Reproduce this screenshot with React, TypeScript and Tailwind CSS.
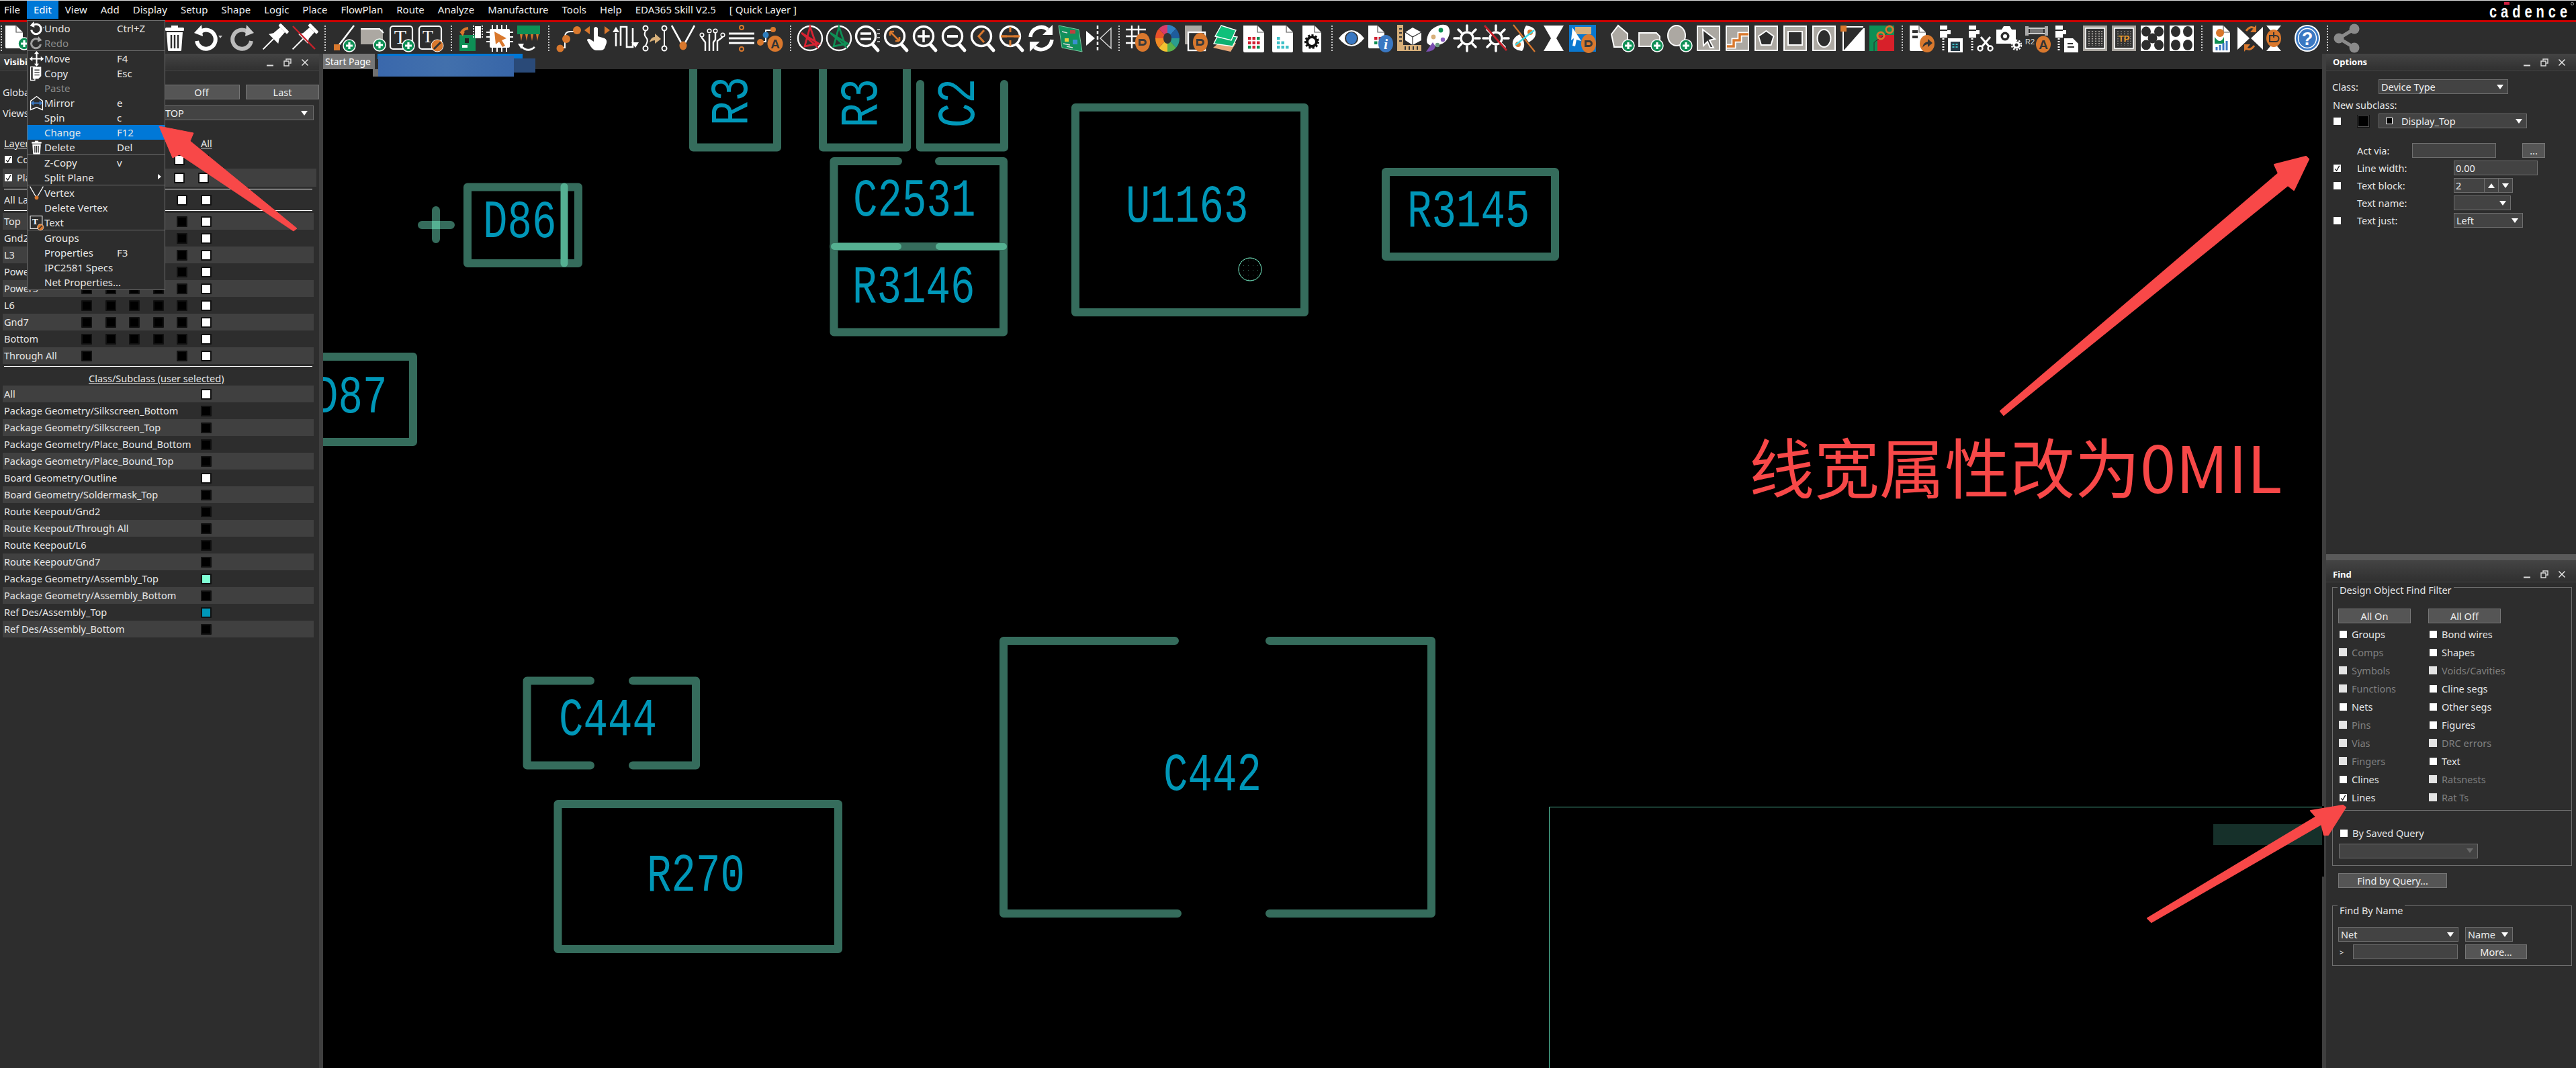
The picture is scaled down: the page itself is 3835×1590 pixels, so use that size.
import React from "react";

const O = "#d9782d";
const GR = "#0e8f55";
const GY = "#aca8a2";

const Plus = ({ x, y }: { x: number; y: number }) => (
  <g>
    <circle cx={x} cy={y} r={9} fill={GR} stroke="#fff" strokeWidth="1.5" />
    <path d={`M${x - 5} ${y}h10M${x} ${y - 5}v10`} stroke="#fff" strokeWidth="3.2" />
  </g>
);
const EyeB = ({ x, y }: { x: number; y: number }) => (
  <g>
    <ellipse cx={x} cy={y} rx={11} ry={14} fill={O} />
    <path d={`M${x - 6} ${y - 5}h7a5 5 0 0 1 0 10h-7z`} fill="#3a3a3a" />
    <path d={`M${x - 3} ${y - 2}h4a2 2 0 0 1 0 4h-4z`} fill={O} />
  </g>
);
const PenB = ({ x, y }: { x: number; y: number }) => (
  <g>
    <circle cx={x} cy={y} r={9} fill={O} stroke="#fff" strokeWidth="1" />
    <path d={`M${x - 5} ${y + 5}l10 -10`} stroke="#333" strokeWidth="3" />
  </g>
);
const Doc = ({ x = 6, w = 28, h = 38 }: { x?: number; w?: number; h?: number }) => (
  <g>
    <path d={`M${x} 3h${w - 10}l10 10v${h - 10}q0 2 -2 2h-${w - 4}q-2 0 -2 -2z`} fill="#fff" />
    <path d={`M${x + w - 10} 3v10h10`} fill="none" stroke="#555" strokeWidth="1.2" />
  </g>
);
const Mag = ({ children }: { children?: React.ReactNode }) => (
  <g>
    <circle cx="17" cy="19" r="14.5" fill="none" stroke="#fff" strokeWidth="3.4" />
    <path d="M27 31l8 9" stroke="#fff" strokeWidth="5" strokeLinecap="round" />
    {children}
  </g>
);
const Pin = () => (
  <g transform="rotate(45 20 20)">
    <rect x="11" y="0" width="18" height="5" rx="1.5" fill="#fff" />
    <path d="M15 5h10l1 13l4 6H10l4-6z" fill="#fff" />
    <path d="M20 24v22" stroke="#fff" strokeWidth="2" />
  </g>
);
const Box = ({ children }: { children?: React.ReactNode }) => (
  <g>
    <rect x="2" y="3" width="35" height="38" fill={GY} />
    <rect x="3" y="4" width="33" height="36" fill="none" stroke="#fff" strokeWidth="2" />
    {children}
  </g>
);
const Wheel = () => {
  const cols = ["#2f7fc0", "#1e5c9c", "#2a9d8f", "#5ab04a", "#f2c230", "#f08a24", "#e8502a", "#d83a6a"];
  return (
    <g>
      {cols.map((c, i) => {
        const a0 = (i * Math.PI) / 4 - Math.PI / 2;
        const a1 = ((i + 1) * Math.PI) / 4 - Math.PI / 2;
        return (
          <path
            key={c}
            d={`M20 22L${20 + 18 * Math.cos(a0)} ${22 + 20 * Math.sin(a0)}A18 20 0 0 1 ${20 + 18 * Math.cos(a1)} ${22 + 20 * Math.sin(a1)}z`}
            fill={c}
          />
        );
      })}
      <ellipse cx="20" cy="22" rx="6" ry="8" fill="#333" />
    </g>
  );
};
const Dots = ({ cs }: { cs: string[] }) => (
  <g>
    {cs.map((c, i) => (
      <rect key={i} x={11 + (i % 3) * 6.5} y={20 + Math.floor(i / 3) * 6.5} width="4.5" height="4.5" fill={c} />
    ))}
  </g>
);
const PinsIc = () => (
  <g>
    <rect x="4" y="3" width="11" height="6" fill="#fff" />
    <rect x="4" y="11" width="11" height="10" fill="#fff" />
    <rect x="15" y="10" width="5" height="6" fill="#fff" />
    <path d="M9 22v19" stroke="#fff" strokeWidth="3" strokeDasharray="2 2" />
  </g>
);
const Sun = () => (
  <g>
    <circle cx="20" cy="22" r="9" fill="none" stroke="#fff" strokeWidth="3.5" />
    <path d="M20 3v7M20 34v7M1 22h7M32 22h7M7 9l5 5M28 30l5 5M33 9l-5 5M12 30l-5 5" stroke="#fff" strokeWidth="3.5" strokeLinecap="round" />
  </g>
);
const Holes = () => (
  <g>
    <rect x="2" y="3" width="35" height="38" fill="#fff" />
    {[[10, 12], [29, 12], [10, 32], [29, 32], [19.5, 22]].map(([x, y]) => (
      <ellipse key={x * y} cx={x} cy={y} rx="7" ry="7.5" fill="#2d2d2d" />
    ))}
  </g>
);

const icons: Record<string, React.ReactNode> = {
  docAdd: (
    <g>
      <Doc x={2} w={26} h={32} />
      <Plus x={30} y={30} />
    </g>
  ),
  trash: (
    <g>
      <rect x="15" y="3" width="10" height="4" fill="#fff" />
      <rect x="6" y="6" width="28" height="5" rx="1.5" fill="#fff" />
      <path d="M8 13h24l-2 27q0 1 -2 1H12q-2 0 -2 -1z" fill="#fff" />
      <path d="M15 17v20M20 17v20M25 17v20" stroke="#2d2d2d" strokeWidth="2.5" />
    </g>
  ),
  undo: (
    <g>
      <path d="M11 12A14 14 0 1 1 5 26" fill="none" stroke="#fff" strokeWidth="6" />
      <path d="M12 2l2 17L1 14z" fill="#fff" />
      <path d="M37 18h6l-3 4z" fill="#ccc" />
    </g>
  ),
  redo: (
    <g>
      <path d="M27 12A14 14 0 1 0 33 26" fill="none" stroke="#bbb" strokeWidth="6" />
      <path d="M26 2l-2 17l13 -5z" fill="#ccc" />
    </g>
  ),
  pin: <Pin />,
  pinX: (
    <g>
      <Pin />
      <path d="M2 4l33 34" stroke="#c8202a" strokeWidth="2.5" />
    </g>
  ),
  lineAdd: (
    <g>
      <path d="M34 3L11 33" stroke="#fff" strokeWidth="2.6" />
      <rect x="4" y="31" width="9" height="9" fill={O} />
      <Plus x={27} y={33} />
    </g>
  ),
  rectAdd: (
    <g>
      <path d="M1 9h33v22H1z" fill={GY} />
      <path d="M1 8h28l6 6" fill="none" stroke="#fff" strokeWidth="2" />
      <Plus x={29} y={32} />
    </g>
  ),
  tAdd: (
    <g>
      <rect x="2" y="4" width="33" height="34" rx="4" fill="none" stroke="#fff" strokeWidth="2.2" />
      <text x="17" y="30" textAnchor="middle" fontFamily="Liberation Serif" fontSize="30" fill="#fff">T</text>
      <Plus x={29} y={33} />
    </g>
  ),
  tEdit: (
    <g>
      <rect x="2" y="4" width="33" height="34" rx="4" fill="none" stroke="#fff" strokeWidth="2.2" />
      <text x="15" y="28" textAnchor="middle" fontFamily="Liberation Serif" fontSize="26" fill="#fff">T</text>
      <PenB x={29} y={33} />
    </g>
  ),
  board: (
    <g>
      <rect x="3" y="17" width="24" height="24" fill={GR} />
      <rect x="11" y="22" width="6" height="7" fill="#222" />
      <rect x="7" y="32" width="8" height="4" fill="#fff" />
      <rect x="26" y="4" width="9" height="18" fill="#fff" />
      <path d="M24 3v20M37 3v20" stroke="#ddd" strokeWidth="2" strokeDasharray="2 2" />
      <path d="M6 14q2 -6 10 -7" fill="none" stroke={O} strokeWidth="4" />
      <path d="M3 12l8 0l-3 7z" fill={O} />
    </g>
  ),
  chip: (
    <g>
      <rect x="5" y="8" width="30" height="28" rx="2" fill="#fff" />
      <path d="M9 2v6M16 2v6M23 2v6M30 2v6M9 36v6M16 36v6M23 36v6M30 36v6M0 13h5M0 20h5M0 27h5M35 13h5M35 20h5M35 27h5" stroke="#fff" strokeWidth="2" />
      <path d="M12 12l18 10l-7 3l5 8l-4 2l-5-8l-5 4z" fill={O} />
    </g>
  ),
  conn: (
    <g>
      <rect x="3" y="3" width="34" height="13" fill={GR} />
      <path d="M7 16l2 10l2-10zM15 16l2 10l2-10zM23 16l2 10l2-10zM31 16l2 10l2-10z" fill={O} />
      <path d="M9 34q10 10 20 1" fill="none" stroke="#fff" strokeWidth="3" />
      <path d="M4 30l9 0l-4 8z" fill="#fff" />
    </g>
  ),
  route: (
    <g>
      <path d="M10 36h5V20q0-8 8-8h7" fill="none" stroke="#fff" strokeWidth="2" />
      <circle cx="8" cy="37" r="5.5" fill={O} />
      <circle cx="17" cy="23" r="6" fill={O} />
      <circle cx="33" cy="10" r="6" fill={O} />
    </g>
  ),
  slide: (
    <g>
      <path d="M15 7q3-4 6 0v12l10 3q4 2 3 7l-3 8q-2 3-6 3h-7q-5-1-9-8l-4-7q0-3 4-2l6 4z" fill="#fff" />
      <path d="M1 10l8-6v12zM39 10l-8-6v12z" fill={O} />
    </g>
  ),
  delay: (
    <g>
      <path d="M5 14v18M5 34V14" stroke="#fff" strokeWidth="2.5" />
      <path d="M10 34V6h9v30h9V8" fill="none" stroke="#fff" strokeWidth="2.6" transform="translate(2 -1)" />
      <path d="M0 13l5-8l5 8zM28 28h11l-5 8z" fill="#fff" />
    </g>
  ),
  swap: (
    <g>
      <circle cx="6" cy="7" r="3.5" fill="none" stroke="#fff" strokeWidth="2" />
      <circle cx="6" cy="37" r="3.5" fill="none" stroke="#fff" strokeWidth="2" />
      <path d="M6 11q-3 6 1 10t-1 12" fill="none" stroke="#fff" strokeWidth="2" />
      <circle cx="34" cy="7" r="3.5" fill="none" stroke="#fff" strokeWidth="2" />
      <circle cx="34" cy="37" r="3.5" fill="none" stroke="#fff" strokeWidth="2" />
      <path d="M34 11v22" stroke="#fff" strokeWidth="2" />
      <path d="M12 28q2-8 8-8v-5l9 8l-9 7v-5q-4 0-8 3z" fill="#d8b07a" />
    </g>
  ),
  vertex: (
    <g>
      <path d="M2 3L19 34L36 3" fill="none" stroke="#fff" strokeWidth="2.6" />
      <ellipse cx="19" cy="33" rx="5.5" ry="6.5" fill={O} />
    </g>
  ),
  fanout: (
    <g>
      <path d="M9 41V28L3 20M15 41V16M21 41V28l3-4V14M27 41V26l8-6" fill="none" stroke="#fff" strokeWidth="2.4" />
      <circle cx="4" cy="17" r="2.8" fill="none" stroke="#fff" strokeWidth="1.5" />
      <circle cx="15" cy="11" r="2.8" fill="none" stroke="#fff" strokeWidth="1.5" />
      <circle cx="24" cy="11" r="2.8" fill="none" stroke="#fff" strokeWidth="1.5" />
      <circle cx="35" cy="17" r="2.8" fill="none" stroke="#fff" strokeWidth="1.5" />
    </g>
  ),
  para: (
    <g>
      <path d="M1 15h38M1 22h38M1 29h38" stroke="#fff" strokeWidth="3" />
      <circle cx="20" cy="6" r="3" fill="none" stroke={O} strokeWidth="2" />
      <circle cx="20" cy="38" r="3" fill="none" stroke={O} strokeWidth="2" />
    </g>
  ),
  auto: (
    <g>
      <path d="M6 27h7V10h9" fill="none" stroke="#fff" strokeWidth="2" />
      <circle cx="5" cy="28" r="5" fill={O} />
      <circle cx="13" cy="17" r="4.5" fill="#2f7fc0" />
      <circle cx="24" cy="9" r="4" fill={O} />
      <ellipse cx="27" cy="30" rx="11.5" ry="12" fill={O} />
      <text x="27" y="37" textAnchor="middle" fontFamily="Liberation Sans" fontWeight="700" fontSize="19" fill="#333">A</text>
    </g>
  ),
  ratR: (
    <g>
      <circle cx="20" cy="22" r="18" fill="none" stroke="#fff" strokeWidth="2.4" />
      <path d="M7 14L33 30L12 34L20 5L30 34z" fill="none" stroke="#d62332" strokeWidth="2.8" />
    </g>
  ),
  ratG: (
    <g>
      <circle cx="20" cy="22" r="18" fill="none" stroke="#fff" strokeWidth="2.4" />
      <path d="M7 14L33 30L12 34L20 5L30 34z" fill="none" stroke="#0e8f55" strokeWidth="2.8" />
    </g>
  ),
  zList: <Mag><path d="M9 15h16M9 23h16" stroke="#fff" strokeWidth="3.5" /><path d="M34 9h4M34 15h4M34 21h4M34 27h4" stroke="#ddd" strokeWidth="1.5" /></Mag>,
  zFit: <Mag><path d="M10 12l14 14M10 12h6M10 12v6M24 26h-6M24 26v-6" stroke={O} strokeWidth="2.6" fill="none" /></Mag>,
  zIn: <Mag><path d="M8 19h18M17 10v18" stroke="#fff" strokeWidth="3.5" /></Mag>,
  zOut: <Mag><path d="M9 19h16" stroke="#fff" strokeWidth="4" /></Mag>,
  zPrev: <Mag><path d="M21 10l-8 9l8 9" fill="none" stroke={O} strokeWidth="3" /></Mag>,
  zCtr: <Mag><path d="M17 5v8M17 25v8M3 19h9M22 19h9" stroke={O} strokeWidth="3" /><path d="M4 19h26" stroke={O} strokeWidth="3" /></Mag>,
  redraw: (
    <g>
      <path d="M4 20A16 16 0 0 1 30 9" fill="none" stroke="#fff" strokeWidth="5.5" />
      <path d="M36 24A16 16 0 0 1 10 35" fill="none" stroke="#fff" strokeWidth="5.5" />
      <path d="M37 2v15H22zM3 42V27h15z" fill="#fff" />
    </g>
  ),
  b3d: (
    <g>
      <path d="M3 3l30 6l5 33l-30-6z" fill="#12905c" stroke="#7ac7a0" strokeWidth="1" />
      <rect x="20" y="10" width="8" height="5" fill="#c04040" />
      <rect x="24" y="24" width="7" height="7" fill="#3a90d0" />
      <rect x="12" y="22" width="6" height="5" fill="#e8d040" />
      <path d="M8 12l8 2M10 30l10 2M15 34l9 2" stroke="#ddd" strokeWidth="1.5" />
    </g>
  ),
  mirror: (
    <g>
      <path d="M1 11l13 11L1 33z" fill="#fff" />
      <path d="M38 7v30L22 22z" fill="none" stroke="#ddd" strokeWidth="1.4" />
      <path d="M18 3v38" stroke="#fff" strokeWidth="2.5" strokeDasharray="5 3" />
    </g>
  ),
  grid: (
    <g>
      <path d="M10 3v34M20 3v30M1 9h30M1 19h22M1 29h18" stroke="#fff" strokeWidth="2.4" />
      <EyeB x={26} y={28} />
    </g>
  ),
  wheel: <Wheel />,
  layers: (
    <g>
      <rect x="3" y="3" width="25" height="28" fill={GY} />
      <rect x="8" y="13" width="25" height="27" fill="#2d2d2d" stroke="#fff" strokeWidth="2.4" />
      <EyeB x={26} y={28} />
    </g>
  ),
  layG: (
    <g>
      <path d="M14 26l22 3l-8 13L2 36z" fill="#e8a878" />
      <path d="M10 16l28 4l-7 14L3 30z" fill="#0eb070" stroke="#fff" strokeWidth="1.4" />
      <path d="M14 3l22 7l-7 15L5 19z" fill="#0ec07a" stroke="#fff" strokeWidth="1.4" />
    </g>
  ),
  docR: (
    <g>
      <Doc x={4} w={31} />
      <Dots cs={["#d02030", "#d02030", "#0e8f55", "#d02030", "#d02030", "#d02030", "#0e8f55", "#d02030", "#0e8f55"]} />
    </g>
  ),
  docC: (
    <g>
      <Doc x={4} w={31} />
      <Dots cs={["#3fc0c8", "#fff", "#fff", "#3fc0c8", "#3fc0c8", "#fff", "#3fc0c8", "#3fc0c8", "#3fc0c8"]} />
    </g>
  ),
  docGear: (
    <g>
      <Doc x={6} w={28} />
      <circle cx="20" cy="27" r="7" fill="#fff" stroke="#111" strokeWidth="4" />
      <circle cx="20" cy="27" r="9.5" fill="none" stroke="#111" strokeWidth="3" strokeDasharray="3 2.5" />
    </g>
  ),
  eye: (
    <g>
      <path d="M1 22Q20 -2 39 22Q20 46 1 22z" fill="#fff" />
      <circle cx="20" cy="22" r="10" fill="#333" />
      <ellipse cx="20" cy="22" rx="8" ry="9" fill="#3a78c2" />
    </g>
  ),
  docInfo: (
    <g>
      <Doc x={2} w={24} h={32} />
      <Dots cs={["#d02030", "#d02030", "#0e8f55", "#0e8f55", "#d02030", "#d02030"]} />
      <ellipse cx="28" cy="30" rx="11" ry="13" fill="#3a78c2" />
      <text x="28" y="38" textAnchor="middle" fontFamily="Liberation Serif" fontStyle="italic" fontWeight="700" fontSize="22" fill="#fff">i</text>
    </g>
  ),
  ruler: (
    <g>
      <path d="M2 2h9v30h27v9H2z" fill="#d8b07a" />
      <path d="M5 8h4M5 14h4M5 20h4M5 26h4M14 39v-5M20 39v-5M26 39v-5M32 39v-5" stroke="#333" strokeWidth="2" />
      <path d="M25 6l13 7v12l-13 7l-11-7V13z" fill="#fff" />
      <path d="M14 13l11 7l13-7M25 20v12" stroke="#333" strokeWidth="1.2" fill="none" />
    </g>
  ),
  palette: (
    <g>
      <path d="M24 2q14 -2 13 12q-2 14-16 18q-8 3-14 0q-6-3-3-12q4-14 20-18z" fill="#fff" />
      <circle cx="24" cy="10" r="3.4" fill={GR} />
      <circle cx="13" cy="20" r="3.4" fill="#d8b07a" />
      <circle cx="27" cy="24" r="3.2" fill="#8a5cc0" />
      <circle cx="19" cy="32" r="3.2" fill="#6a9a80" />
      <path d="M12 28L2 42q12 0 14-8z" fill="#7a4fb0" />
    </g>
  ),
  sun: <Sun />,
  sunX: (
    <g>
      <Sun />
      <path d="M3 3l33 37" stroke="#c8202a" strokeWidth="2.8" />
    </g>
  ),
  eyes: (
    <g>
      <path d="M22 3q16 2 14 14q-1 6-10 11q-12-14-4-25zM16 41q-16-2-14-14q1-6 10-11q12 14 4 25z" fill="#fff" />
      <circle cx="28" cy="13" r="4" fill={O} />
      <circle cx="10" cy="31" r="4" fill={O} />
      <path d="M3 2l32 40" stroke={O} strokeWidth="2.2" />
      <path d="M6 32L34 10" stroke="#38d8e8" strokeWidth="2.4" />
    </g>
  ),
  hour: <path d="M5 3h30L24 22l11 19H5l11-19z" fill="#fff" />,
  blueC: (
    <g>
      <rect x="0" y="2" width="40" height="40" fill="#0a78d0" />
      <rect x="9" y="5" width="24" height="11" fill="#d8b07a" />
      <path d="M5 6l13 20l-7-2l-2 10l-4-1l2-11l-4 3z" fill="#fff" />
      <EyeB x={29} y={30} />
    </g>
  ),
  polyAdd: (
    <g>
      <path d="M4 16L14 3l14 12v20H8z" fill={GY} stroke="#fff" strokeWidth="2" />
      <Plus x={29} y={33} />
    </g>
  ),
  rectAdd2: (
    <g>
      <path d="M2 14h26l5 5v15H2z" fill={GY} stroke="#fff" strokeWidth="1.8" />
      <Plus x={29} y={33} />
    </g>
  ),
  circAdd: (
    <g>
      <ellipse cx="15" cy="18" rx="13" ry="15" fill={GY} stroke="#fff" strokeWidth="2" />
      <Plus x={29} y={33} />
    </g>
  ),
  selShape: (
    <Box>
      <path d="M11 9l18 14l-8 2l6 11h-5l-4-9l-6 6z" fill="#2d2d2d" stroke="#fff" strokeWidth="2" />
    </Box>
  ),
  stair: (
    <Box>
      <path d="M4 34h10v-9h9v-9h13" fill="none" stroke="#fff" strokeWidth="7" />
      <path d="M4 34h10v-9h9v-9h13" fill="none" stroke={O} strokeWidth="3.5" />
    </Box>
  ),
  pentBox: (
    <Box>
      <path d="M19.5 11l11 8l-4 13H12L8 19z" fill="#2d2d2d" stroke="#fff" strokeWidth="2" />
    </Box>
  ),
  rectBox: (
    <Box>
      <rect x="9" y="12" width="21" height="20" fill="#2d2d2d" stroke="#fff" strokeWidth="2" />
    </Box>
  ),
  ovalBox: (
    <Box>
      <ellipse cx="19.5" cy="22" rx="10" ry="13" fill="#2d2d2d" stroke="#fff" strokeWidth="2" />
    </Box>
  ),
  diag: (
    <g>
      <rect x="3" y="3" width="34" height="38" fill="#2d2d2d" />
      <path d="M35 7L5 41h32V7z" fill="#fff" />
      <path d="M5 41V8" stroke="#fff" strokeWidth="2" />
      <path d="M3 5h32" stroke="#fff" strokeWidth="2" />
      <rect x="1" y="3" width="9" height="9" fill={O} />
    </g>
  ),
  gr: (
    <g>
      <rect x="1" y="3" width="37" height="38" fill={GR} />
      <rect x="13" y="17" width="25" height="24" fill="#d8202a" />
      <path d="M8 41V28L28 14V3" fill="none" stroke="#2d2d2d" strokeWidth="1" />
      <circle cx="31" cy="9" r="5" fill="none" stroke={O} strokeWidth="3" />
      <circle cx="18" cy="18" r="5" fill="none" stroke={O} strokeWidth="3" />
    </g>
  ),
  docArrow: (
    <g>
      <Doc x={2} w={24} h={36} />
      <rect x="6" y="10" width="8" height="4" fill="#333" />
      <rect x="6" y="18" width="8" height="4" fill="#333" />
      <ellipse cx="28" cy="30" rx="11" ry="13" fill={O} />
      <path d="M21 36q1-8 8-9v-4l7 6l-7 6v-4q-4 0-8 5z" fill="#333" />
    </g>
  ),
  pinsDoc: (
    <g>
      <PinsIc />
      <rect x="16" y="22" width="22" height="21" fill="#fff" />
      <rect x="20" y="27" width="14" height="14" fill="#263a46" />
      <path d="M24 30v8M29 30v8" stroke="#3fc0c8" strokeWidth="3" strokeDasharray="2 2" />
    </g>
  ),
  pinsCut: (
    <g>
      <PinsIc />
      <path d="M22 20l12 14M36 20L24 34" stroke="#fff" strokeWidth="3" />
      <circle cx="21" cy="37" r="3.5" fill="none" stroke="#fff" strokeWidth="2.4" />
      <circle cx="36" cy="37" r="3.5" fill="none" stroke="#fff" strokeWidth="2.4" />
    </g>
  ),
  camGear: (
    <g>
      <path d="M2 9h8l3-5h9l3 5h6v21H2z" fill="#fff" />
      <circle cx="15" cy="19" r="6.5" fill="#2d2d2d" />
      <circle cx="15" cy="19" r="3" fill="#fff" />
      <circle cx="32" cy="32" r="4" fill="#2d2d2d" stroke="#fff" strokeWidth="3" />
      <circle cx="32" cy="32" r="7" fill="none" stroke="#fff" strokeWidth="2.5" strokeDasharray="2.5 2" />
    </g>
  ),
  r2a: (
    <g>
      <rect x="2" y="4" width="5" height="14" fill="#aaa" />
      <rect x="31" y="4" width="5" height="14" fill="#aaa" />
      <path d="M7 7h24M7 15h24" stroke="#ccc" strokeWidth="2" />
      <rect x="9" y="8" width="20" height="6" fill="#777" />
      <text x="2" y="31" fontFamily="Liberation Sans" fontSize="11" fill="#ddd">R2</text>
      <ellipse cx="29" cy="31" rx="11" ry="12.5" fill={O} />
      <text x="29" y="38" textAnchor="middle" fontFamily="Liberation Sans" fontWeight="700" fontSize="19" fill="#333">A</text>
    </g>
  ),
  pinsDoc2: (
    <g>
      <PinsIc />
      <path d="M17 22h13l8 8v13H17z" fill="#fff" />
      <path d="M22 30h8M22 35h10" stroke="#333" strokeWidth="2" />
    </g>
  ),
  via: (
    <g>
      <rect x="2" y="3" width="36" height="38" fill={GY} />
      <rect x="6" y="7" width="28" height="30" fill="#333" stroke="#fff" strokeWidth="1.6" />
      <path d="M11 11v22M16 11v22M21 11v22M26 11v22M30 11v22" stroke={GY} strokeWidth="2.2" strokeDasharray="1.6 2" />
    </g>
  ),
  tp: (
    <g>
      <rect x="2" y="3" width="36" height="38" fill={GY} />
      <rect x="6" y="7" width="28" height="30" fill="#333" stroke="#fff" strokeWidth="1.6" />
      <path d="M11 11v22M16 11v22M21 11v22M26 11v22M30 11v22" stroke={GY} strokeWidth="2" strokeDasharray="1.6 2" opacity="0.6" />
      <text x="20" y="27" textAnchor="middle" fontFamily="Liberation Sans" fontWeight="700" fontSize="13" fill="#e59a2c">TP</text>
    </g>
  ),
  holes: <Holes />,
  holes2: (
    <g>
      <rect x="2" y="3" width="36" height="38" fill="#fff" />
      {[[11, 12], [29, 12], [11, 32], [29, 32]].map(([x, y]) => (
        <ellipse key={x * y} cx={x} cy={y} rx="7" ry="8" fill="#2d2d2d" />
      ))}
    </g>
  ),
  docChart: (
    <g>
      <Doc x={7} w={26} />
      <circle cx="18" cy="14" r="6" fill={O} />
      <path d="M10 20q8 12 14 0v10H10z" fill={GR} />
      <path d="M13 40v-5M18 40v-8M23 40v-11M28 40v-14" stroke="#3a78c2" strokeWidth="3" />
    </g>
  ),
  bow: (
    <g>
      <path d="M1 5l18 17L1 39zM39 5L21 22l18 17z" fill="#fff" />
      <path d="M14 11q6-9 14-3M26 33q-6 9-14 3" fill="none" stroke={O} strokeWidth="3" />
      <path d="M29 2v11h-9zM11 42V31h9z" fill={O} />
    </g>
  ),
  hourG: (
    <g>
      <path d="M9 3h22l-9 11h-4zM9 41h22l-9-11h-4z" fill="#fff" />
      <ellipse cx="20" cy="22" rx="11" ry="13" fill={O} />
      <path d="M14 18h9a4 4 0 0 1 0 9h-9z" fill="none" stroke="#333" strokeWidth="2" />
      <path d="M20 13v8" stroke="#333" strokeWidth="2" />
    </g>
  ),
  help: (
    <g>
      <ellipse cx="20" cy="22" rx="19" ry="20" fill="#fff" />
      <ellipse cx="20" cy="22" rx="17" ry="18" fill="#3a78c2" />
      <ellipse cx="20" cy="22" rx="13.5" ry="14.5" fill="none" stroke="#fff" strokeWidth="1.4" />
      <text x="20" y="32" textAnchor="middle" fontFamily="Liberation Sans" fontWeight="700" fontSize="27" fill="#fff">?</text>
    </g>
  ),
  share: (
    <g>
      <path d="M31 8L8 22l23 14" fill="none" stroke="#8a8a8a" strokeWidth="5" />
      <circle cx="31" cy="8" r="7.5" fill="#8a8a8a" />
      <circle cx="8" cy="22" r="7.5" fill="#8a8a8a" />
      <circle cx="31" cy="36" r="7.5" fill="#8a8a8a" />
    </g>
  ),
  move: (
    <g>
      <path d="M20 2v40M1 22h38" stroke="#fff" strokeWidth="4" />
      <path d="M20 0l7 8H13zM20 44l7-8H13zM0 22l8-7v14zM40 22l-8-7v14z" fill="#fff" />
    </g>
  ),
  copy: (
    <g>
      <rect x="3" y="3" width="12" height="38" fill="none" stroke="#fff" strokeWidth="2.5" />
      <path d="M9 3h24v26l-8 8H9z" fill="#fff" />
      <path d="M14 12h14M14 19h14M14 26h14" stroke="#333" strokeWidth="2.5" />
    </g>
  ),
  mirrorM: (
    <g>
      <path d="M3 16L20 3l17 13v25l-17-7l-17 7z" fill="#2d2d2d" stroke="#fff" strokeWidth="2.6" />
      <path d="M6 22h28" stroke="#3a78c2" strokeWidth="4" />
      <path d="M3 22l9-7v14zM37 22l-9-7v14z" fill="#3a78c2" />
    </g>
  ),
  vertexM: (
    <g>
      <path d="M1 3l19 33L39 3" fill="none" stroke="#fff" strokeWidth="2.4" />
      <circle cx="20" cy="35" r="5.5" fill={O} />
    </g>
  ),
  textM: (
    <g>
      <rect x="2" y="3" width="34" height="36" fill="none" stroke="#fff" strokeWidth="2" />
      <text x="16" y="26" textAnchor="middle" fontFamily="Liberation Serif" fontWeight="700" fontSize="25" fill="#fff">T</text>
      <PenB x={31} y={35} />
    </g>
  ),
};

const Ic = ({ n, cls = "w-[40px] h-[44px]" }: { n: string; cls?: string }) => (
  <svg viewBox="0 0 40 44" className={`${cls} overflow-visible shrink-0`}>
    {icons[n]}
  </svg>
);
const Cell = ({ n, w = "w-[43px]" }: { n: string; w?: string }) => (
  <div className={`${w} flex justify-center items-center shrink-0`}>
    <Ic n={n} />
  </div>
);
const Sep = ({ w = "w-[16px]" }: { w?: string }) => (
  <div className={`${w} flex justify-center shrink-0`}>
    <div className="h-[38px] border-l-2 border-dotted border-[#c8c8c8]" />
  </div>
);
const G = ({ ns }: { ns: string[] }) => (
  <>
    {ns.map((n) => (
      <Cell key={n} n={n} />
    ))}
  </>
);

const menus = ["File", "Edit", "View", "Add", "Display", "Setup", "Shape", "Logic", "Place", "FlowPlan", "Route", "Analyze", "Manufacture", "Tools", "Help", "EDA365 Skill V2.5", "[ Quick Layer ]"];

const MenuRow = ({ t, k, ic, dis, hi, sub }: { t: string; k?: string; ic?: string; dis?: boolean; hi?: boolean; sub?: boolean }) => (
  <div className={`relative h-[22px] flex items-center pl-[25px] ${hi ? "bg-[#0078d7]" : ""} ${dis ? "text-[#8c8c8c]" : "text-[#e6e6e6]"}`}>
    {ic && (
      <div className="absolute left-[2px] top-[-1px] w-[22px] h-[24px] flex items-center justify-center">
        <Ic n={ic} cls={ic === "redo" ? "w-[20px] h-[22px] opacity-80" : "w-[21px] h-[23px]"} />
      </div>
    )}
    <span className="w-[108px] whitespace-nowrap">{t}</span>
    <span>{k}</span>
    {sub && <span className="absolute right-[5px] top-[6px] w-0 h-0 border-y-[4.5px] border-y-transparent border-l-[5px] border-l-white" />}
  </div>
);
const MDiv = () => <div className="h-px bg-[#6e6e6e]" />;

const Win = () => (
  <div className="ml-auto flex items-center gap-[14px] pr-[15px]">
    <svg viewBox="0 0 12 12" className="w-[12px] h-[12px]"><path d="M1 10.5h10" stroke="#ddd" strokeWidth="2" /></svg>
    <svg viewBox="0 0 12 12" className="w-[12px] h-[12px]"><path d="M4 3V1h7v6H9M1 4h7v7H1z" fill="none" stroke="#ddd" strokeWidth="1.4" /></svg>
    <svg viewBox="0 0 12 12" className="w-[12px] h-[12px]"><path d="M1.5 1.5l9 9M10.5 1.5l-9 9" stroke="#eee" strokeWidth="1.4" /></svg>
  </div>
);
const Title = ({ t }: { t: string }) => (
  <div className="h-[26px] shrink-0 flex items-center pl-[6px] bg-linear-to-b from-[#444444] to-[#303030] border-b border-[#444444] text-[13px] font-bold text-white">
    {t}
    <Win />
  </div>
);
const Title2 = ({ t, h }: { t: string; h: string }) => (
  <div className={`${h} shrink-0 flex items-center pl-[10px] bg-linear-to-b from-[#444444] to-[#303030] border-b border-[#444444] text-[13px] font-bold text-white`}>
    {t}
    <Win />
  </div>
);

const Sw = ({ c, hide }: { c: "k" | "w" | "m" | "b"; hide?: boolean }) => {
  const cl = c === "k" ? "bg-black border-[#111111]" : c === "w" ? "bg-white border-[#111111]" : c === "m" ? "bg-[#7fffd4] border-[#111111]" : "bg-[#0097b8] border-[#111111]";
  return <div className={`w-[16px] h-[16px] shrink-0 rounded-[1px] border-2 ${cl} ${hide ? "invisible" : ""}`} />;
};
const Row = ({ s, children }: { s?: boolean; children: React.ReactNode }) => (
  <div className={`h-[25px] mx-[4px] w-[463px] pl-[2px] flex items-center ${s ? "bg-[#404040]" : ""}`}>{children}</div>
);
const Chk = ({ on, dis }: { on?: boolean; dis?: boolean }) => (
  <div className={`${dis ? "w-[12px] h-[12px] bg-[#e4e4e4] -ml-px" : "w-[11px] h-[11px] bg-white"} shrink-0 flex items-center justify-center`}>
    {on && (
      <svg viewBox="0 0 12 12" className="w-[11px] h-[11px]"><path d="M2.5 7l2.5 3l4.5-8" fill="none" stroke="#111" strokeWidth="1.3" /></svg>
    )}
  </div>
);
const Tri = ({ dim }: { dim?: boolean }) => (
  <span className={`w-0 h-0 shrink-0 border-x-[5.5px] border-x-transparent border-t-[7px] ${dim ? "border-t-[#6a6a6a]" : "border-t-white"}`} />
);
const Sel = ({ w, children, dim }: { w: string; children?: React.ReactNode; dim?: boolean }) => (
  <div className={`${w} h-[22px] shrink-0 flex items-center justify-between pl-[3px] pr-[6px] bg-[#434343] border border-[#6e6e6e] text-[#eeeeee]`}>
    <span className="flex items-center whitespace-nowrap">{children}</span>
    <Tri dim={dim} />
  </div>
);
const Btn = ({ w, children }: { w: string; children: React.ReactNode }) => (
  <div className={`${w} h-[22px] shrink-0 flex items-center justify-center bg-[#555555] border border-[#777777] text-[#eeeeee]`}>{children}</div>
);
const Inp = ({ w, children }: { w: string; children?: React.ReactNode }) => (
  <div className={`${w} h-[22px] shrink-0 flex items-center pl-[2px] bg-[#434343] border border-[#6e6e6e] text-[#eeeeee]`}>{children}</div>
);

const finds: [string, boolean, boolean, string, boolean][] = [
  ["Groups", false, false, "Bond wires", false],
  ["Comps", true, false, "Shapes", false],
  ["Symbols", true, false, "Voids/Cavities", true],
  ["Functions", true, false, "Cline segs", false],
  ["Nets", false, false, "Other segs", false],
  ["Pins", true, false, "Figures", false],
  ["Vias", true, false, "DRC errors", true],
  ["Fingers", true, false, "Text", false],
  ["Clines", false, false, "Ratsnests", true],
  ["Lines", false, true, "Rat Ts", true],
];

const classes: [string, "k" | "w" | "m" | "b"][] = [
  ["All", "w"],
  ["Package Geometry/Silkscreen_Bottom", "k"],
  ["Package Geometry/Silkscreen_Top", "k"],
  ["Package Geometry/Place_Bound_Bottom", "k"],
  ["Package Geometry/Place_Bound_Top", "k"],
  ["Board Geometry/Outline", "w"],
  ["Board Geometry/Soldermask_Top", "k"],
  ["Route Keepout/Gnd2", "k"],
  ["Route Keepout/Through All", "k"],
  ["Route Keepout/L6", "k"],
  ["Route Keepout/Gnd7", "k"],
  ["Package Geometry/Assembly_Top", "m"],
  ["Package Geometry/Assembly_Bottom", "k"],
  ["Ref Des/Assembly_Top", "b"],
  ["Ref Des/Assembly_Bottom", "k"],
];
const layers = ["Top", "Gnd2", "L3", "Power4", "Power5", "L6", "Gnd7", "Bottom", "Through All"];

const Swatches = ({ list }: { list: ("k" | "w" | null)[] }) => (
  <div className="flex gap-[19.6px] ml-[115px]">
    {list.map((c, i) => (
      <Sw key={i} c={c ?? "k"} hide={c === null} />
    ))}
  </div>
);
const Label = ({ children }: { children: React.ReactNode }) => (
  <span className="absolute left-[2px] whitespace-nowrap">{children}</span>
);

const pcbLabel = "absolute font-['Liberation_Mono'] text-[80px] leading-none text-[#0097b8] whitespace-nowrap origin-top-left [transform:scaleX(.76)]";
const pcbRot = "absolute font-['Liberation_Mono'] text-[80px] leading-none text-[#0097b8] whitespace-nowrap origin-top-left [transform:rotate(-90deg)_scaleX(.76)]";

const PCB = () => (
  <svg viewBox="0 0 2976 1487" className="absolute inset-0 w-[2976px] h-[1487px]">
    <defs>
      <pattern id="dots" width="7" height="7" patternUnits="userSpaceOnUse">
        <rect x="3" y="3" width="1" height="1" fill="#2f5f50" />
      </pattern>
    </defs>
    <g transform="translate(-481 -103)">
      <path d="M3460 1227h-165v31h165z" fill="#16302a" />
      <path d="M2306.5 1600V1201.5H3457" fill="none" stroke="#4fb898" strokeWidth="1" />
      <g fill="none" stroke="#356c5c" strokeWidth="12" strokeLinejoin="round" strokeLinecap="round">
        <path d="M1032 80V219.5H1157V80" />
        <path d="M1225 80V219.5H1350V80" />
        <path d="M1370 125V219.5H1495V125" />
        <path d="M1337 240H1241.5V494.5H1494V240H1398" />
        <path d="M1241 367H1494" />
        <rect x="696" y="278.5" width="165" height="113.5" />
        <path d="M628 335H671M649 313V356" />
        <path d="M440 531H615V658H440" />
        <rect x="1601" y="160" width="341" height="305" />
        <rect x="2063" y="256" width="252" height="126" />
        <path d="M879 1013.6H784.6V1139.6H879M942 1013.6H1036V1139.6H942" />
        <rect x="830.5" y="1197" width="417.5" height="216" />
        <path d="M1749 954H1494V1360H1753M1890 954H2131V1360H1890" />
      </g>
      <g fill="none" stroke="#55b092" strokeLinecap="round">
        <path d="M1242 367H1337M1398 367H1494" strokeWidth="10" />
        <path d="M840 278V392" strokeWidth="11" />
        <path d="M643 335H655" strokeWidth="12" strokeLinecap="butt" />
      </g>
      <ellipse cx="1861" cy="401" rx="17" ry="17" fill="url(#dots)" stroke="#7fffd4" strokeWidth="1" />
    </g>
  </svg>
);

export default function App() {
  return (
    <div className="relative w-[3835px] h-[1590px] overflow-hidden flex flex-col bg-[#2d2d2d] font-['Noto_Sans'] text-[14.5px] leading-none text-[#e6e6e6]">
      {/* menu bar */}
      <div className="h-[30px] shrink-0 bg-black border-t border-[#dddddd] flex items-stretch relative">
        <div className="flex -ml-[4px]">
          {menus.map((m) => (
            <div key={m} className={`px-[10px] h-[27px] flex items-center whitespace-nowrap text-[15px] ${m === "Edit" ? "bg-[#0078d7] text-white" : "text-[#eeeeee]"}`}>
              {m}
            </div>
          ))}
        </div>
        <div className="ml-auto relative w-[130px] flex items-center">
          <span className="font-['Liberation_Sans'] text-[20px] font-bold text-white tracking-[6px] ml-[1px] mt-[2px] [transform:scaleY(1.3)]">cadence</span>
          <span className="absolute left-[23px] top-[2px] w-[8px] h-[4px] bg-[#d02040]" />
          <span className="absolute right-[3px] top-[2px] w-[5px] h-[5px] rounded-full border border-[#bbbbbb]" />
        </div>
      </div>
      <div className="h-[3px] shrink-0 bg-[#cc0000]" />
      {/* toolbar */}
      <div className="h-[47px] shrink-0 flex items-center">
        <Sep w="w-[4.5px]" />
        <Cell n="docAdd" />
        <div className="w-[191px] shrink-0" />
        <Cell n="trash" />
        <Cell n="undo" w="w-[52px]" />
        <Cell n="redo" w="w-[55px]" />
        <Cell n="pin" />
        <Cell n="pinX" w="w-[44px]" />
        <Sep />
        <G ns={["lineAdd", "rectAdd", "tAdd", "tEdit"]} />
        <Sep />
        <G ns={["board", "chip", "conn"]} />
        <Sep />
        <G ns={["route", "slide", "delay", "swap", "vertex", "fanout", "para", "auto"]} />
        <Sep />
        <G ns={["ratR", "ratG", "zList", "zFit", "zIn", "zOut", "zPrev", "zCtr", "redraw", "b3d", "mirror"]} />
        <Sep />
        <G ns={["grid", "wheel", "layers", "layG", "docR", "docC", "docGear"]} />
        <Sep />
        <G ns={["eye", "docInfo", "ruler", "palette", "sun", "sunX", "eyes", "hour", "blueC"]} />
        <div className="w-[16px] shrink-0" />
        <G ns={["polyAdd", "rectAdd2", "circAdd", "selShape", "stair", "pentBox", "rectBox", "ovalBox", "diag", "gr"]} />
        <Sep />
        <G ns={["docArrow", "pinsDoc", "pinsCut", "camGear", "r2a", "pinsDoc2", "via", "tp", "holes", "holes2"]} />
        <Sep />
        <G ns={["docChart", "bow"]} />
        <Cell n="hourG" w="w-[27px]" />
        <div className="w-[15px] shrink-0" />
        <Cell n="help" />
        <Sep />
        <Cell n="share" />
      </div>
      {/* body */}
      <div className="flex-1 flex min-h-0">
        {/* left panel */}
        <div className="w-[475px] shrink-0 flex flex-col">
          <Title t="Visibility" />
          <div className="h-[20px] shrink-0" />
          <div className="h-[22px] shrink-0 flex items-center pl-[4px]">
            <span className="w-[96px] whitespace-nowrap overflow-hidden">Global Visibility:</span>
            <div className="flex gap-[9px] ml-[24px]">
              <Btn w="w-[110px]">On</Btn>
              <Btn w="w-[114px]">Off</Btn>
              <Btn w="w-[109px]">Last</Btn>
            </div>
          </div>
          <div className="h-[9px] shrink-0" />
          <div className="h-[22px] shrink-0 flex items-center pl-[4px]">
            <span className="w-[100px]">Views:</span>
            <div className="w-[363px] h-[22px] flex items-center justify-between pr-[8px] bg-[#434343] border border-[#6e6e6e] text-[#eeeeee]">
              <span className="pl-[141px]">TOP</span>
              <Tri />
            </div>
          </div>
          <div className="h-[24px] shrink-0" />
          <div className="h-[21px] shrink-0 relative flex items-center">
            <span className="absolute left-[6px] underline">Layer</span>
            <span className="absolute left-[299px] underline">All</span>
          </div>
          <div className="h-[27px] shrink-0 mx-[4px] pl-[3px] flex items-center relative">
            <Chk on />
            <span className="ml-[7px] w-[100px]">Conductors</span>
            <div className="flex gap-[19.6px] ml-[134px]">
              <Sw c="w" />
              <Sw c="w" />
            </div>
          </div>
          <div className="h-[27px] shrink-0 mx-[4px] pl-[3px] flex items-center bg-[#404040]">
            <Chk on />
            <span className="ml-[7px] w-[100px]">Planes</span>
            <div className="flex gap-[19.6px] ml-[134px]">
              <Sw c="w" />
              <Sw c="w" />
            </div>
          </div>
          <div className="h-px shrink-0 bg-white mx-[6px] mt-[3px] w-[459px]" />
          <div className="h-[31px] shrink-0 mx-[4px] pl-[2px] flex items-center relative">
            <Label>All Layers</Label>
            <div className="flex gap-[19.6px] ml-[257px]">
              <Sw c="w" />
              <Sw c="w" />
            </div>
          </div>
          <div className="h-px shrink-0 bg-white mx-[6px] w-[459px]" />
          <div className="h-[3px] shrink-0" />
          {layers.map((l, i) => (
            <Row key={l} s={i % 2 === 0}>
              <span className="w-0 whitespace-nowrap">{l}</span>
              <Swatches list={l === "Through All" ? ["k", null, null, null, "k", "w"] : ["k", "k", "k", "k", "k", "w"]} />
            </Row>
          ))}
          <div className="h-px shrink-0 bg-white mx-[6px] mt-[3px] w-[459px]" />
          <div className="h-[28px] shrink-0 flex items-center justify-start pl-[132px] pt-[6px]">
            <span className="underline">Class/Subclass (user selected)</span>
          </div>
          {classes.map(([t, c], i) => (
            <Row key={t} s={i % 2 === 0}>
              <span className="w-[293px] whitespace-nowrap">{t}</span>
              <Sw c={c} />
            </Row>
          ))}
        </div>
        <div className="w-[6px] shrink-0 bg-[#3f3f3f]" />
        {/* centre */}
        <div className="flex-1 min-w-0 flex flex-col">
          <div className="h-[23px] shrink-0 relative z-10 flex">
            <div className="w-[77px] bg-[#777777] flex items-center pl-[3px] text-[14px] text-white">Start Page</div>
            <div className="absolute left-[74px] top-[23px] w-[8px] h-[11px] bg-[#707070]" />
            <div className="absolute left-[81px] top-0 w-[216px] h-[8px] bg-[#0078d7]" />
            <div className="absolute left-[284px] top-[7px] w-[32px] h-[21px] bg-[#2a4a78]" />
            <div className="absolute left-[82px] top-[3px] w-[202px] h-[31px] bg-linear-to-r from-[#3a68ac] via-[#4270ac] to-[#3866a8]" />
          </div>
          <div className="flex-1 relative bg-black overflow-hidden">
            <PCB />
            <div className={`${pcbRot} left-[570px] top-[84px]`}>R3</div>
            <div className={`${pcbRot} left-[763px] top-[87px]`}>R3</div>
            <div className={`${pcbRot} left-[908px] top-[87px]`}>C2</div>
            <div className={`${pcbLabel} left-[238px] top-[189px]`}>D86</div>
            <div className={`${pcbLabel} left-[789px] top-[157px]`}>C2531</div>
            <div className={`${pcbLabel} left-[788px] top-[286px]`}>R3146</div>
            <div className={`${pcbLabel} left-[-14px] top-[450px]`}>D87</div>
            <div className={`${pcbLabel} left-[1195px] top-[166px]`}>U1163</div>
            <div className={`${pcbLabel} left-[1614px] top-[173px]`}>R3145</div>
            <div className={`${pcbLabel} left-[351px] top-[930px]`}>C444</div>
            <div className={`${pcbLabel} left-[482px] top-[1162px]`}>R270</div>
            <div className={`${pcbLabel} left-[1251px] top-[1012px]`}>C442</div>
            <div className="absolute left-[2123px] top-[540px] font-['Noto_Sans_CJK_SC'] leading-none text-[#f84848] whitespace-nowrap">
              <span className="text-[97px]">线宽属性改为</span>
              <span className="text-[96px]">0MIL</span>
            </div>
          </div>
        </div>
        <div className="w-[6px] shrink-0 bg-[#3f3f3f] relative">
          <div className="absolute left-0 top-[1120px] w-[3px] h-[105px] bg-black" />
        </div>
        {/* right panel */}
        <div className="w-[372px] shrink-0 flex flex-col">
          <div className="h-[745px] shrink-0 flex flex-col">
            <Title2 t="Options" h="h-[26px]" />
            <div className="mt-[12px] h-[22px] flex items-center pl-[9px]">
              <span className="w-[69px]">Class:</span>
              <Sel w="w-[193px]">Device Type</Sel>
            </div>
            <div className="mt-[5px] h-[22px] flex items-center pl-[10px]">New subclass:</div>
            <div className="mt-[2px] h-[22px] flex items-center pl-[11px]">
              <Chk />
              <div className="ml-[24px] w-[19px] h-[19px] bg-black border border-[#111111] outline outline-[#555555] -outline-offset-2" />
              <div className="ml-[13px]">
                <Sel w="w-[221px]">
                  <span className="ml-[7px] w-[10px] h-[10px] bg-black border border-white" />
                  <span className="ml-[13px]">Display_Top</span>
                </Sel>
              </div>
            </div>
            <div className="mt-[22px] h-[22px] flex items-center pl-[46px]">
              <span className="w-[82px]">Act via:</span>
              <Inp w="w-[125px]" />
              <div className="ml-[39px]"><Btn w="w-[34px]">...</Btn></div>
            </div>
            <div className="mt-[4px] h-[22px] flex items-center pl-[11px]">
              <Chk on />
              <span className="ml-[24px] w-[144px]">Line width:</span>
              <Inp w="w-[125px]">0.00</Inp>
            </div>
            <div className="mt-[4px] h-[22px] flex items-center pl-[11px]">
              <Chk />
              <span className="ml-[24px] w-[144px]">Text block:</span>
              <Inp w="w-[46px]">2</Inp>
              <div className="w-[22px] h-[22px] -ml-px bg-[#434343] border border-[#6e6e6e] flex items-center justify-center">
                <span className="w-0 h-0 border-x-[5.5px] border-x-transparent border-b-[7px] border-b-white" />
              </div>
              <div className="w-[22px] h-[22px] -ml-px bg-[#434343] border border-[#6e6e6e] flex items-center justify-center">
                <Tri />
              </div>
            </div>
            <div className="mt-[4px] h-[22px] flex items-center pl-[46px]">
              <span className="w-[144px]">Text name:</span>
              <Sel w="w-[85px]" />
            </div>
            <div className="mt-[4px] h-[22px] flex items-center pl-[11px]">
              <Chk />
              <span className="ml-[24px] w-[144px]">Text just:</span>
              <Sel w="w-[103px]">Left</Sel>
            </div>
          </div>
          <div className="h-[9px] shrink-0 bg-[#5a5a5a]" />
          <div className="flex-1 flex flex-col">
            <Title2 t="Find" h="h-[33px] pt-[10px]" />
            <div className="relative mx-[9px] mt-[7px] h-[415px] w-[357px] shrink-0 border border-[#6e6e6e] flex flex-col">
              <span className="absolute left-[7px] -top-[4px] h-[15px] flex items-center px-[3px] bg-[#2d2d2d] whitespace-nowrap">Design Object Find Filter</span>
              <div className="mt-[31px] ml-[8px] flex gap-[26px]">
                <Btn w="w-[108px]">All On</Btn>
                <Btn w="w-[108px]">All Off</Btn>
              </div>
              <div className="mt-[2.5px] ml-[10px] grid grid-cols-[134px_134px]">
                {finds.flatMap(([a, ad, an, b, bd]) => [
                  <div key={a} className={`h-[27px] flex items-center ${ad ? "text-[#808080]" : ""}`}>
                    <Chk dis={ad} on={an} />
                    <span className="ml-[7px]">{a}</span>
                  </div>,
                  <div key={b} className={`h-[27px] flex items-center ${bd ? "text-[#808080]" : ""}`}>
                    <Chk dis={bd} />
                    <span className="ml-[7px]">{b}</span>
                  </div>,
                ])}
              </div>
              <div className="h-px bg-[#6e6e6e] mt-[5px]" />
              <div className="mt-[23px] ml-[11px] h-[22px] flex items-center">
                <Chk />
                <span className="ml-[7px]">By Saved Query</span>
              </div>
              <div className="mt-[4px] ml-[9px]">
                <Sel w="w-[207px]" dim />
              </div>
            </div>
            <div className="mt-[11px] ml-[18px]">
              <Btn w="w-[162px]">Find by Query...</Btn>
            </div>
            <div className="relative mx-[9px] mt-[26px] h-[90px] w-[357px] shrink-0 border border-[#6e6e6e] flex flex-col">
              <span className="absolute left-[7px] -top-[1px] h-[15px] flex items-center px-[3px] bg-[#2d2d2d] whitespace-nowrap">Find By Name</span>
              <div className="mt-[31px] ml-[8px] flex gap-[10px]">
                <Sel w="w-[179px]">Net</Sel>
                <Sel w="w-[71px]">Name</Sel>
              </div>
              <div className="mt-[4px] ml-[10px] flex items-center">
                <span className="w-[20px] text-[11px]">&gt;</span>
                <Inp w="w-[156px]" />
                <div className="ml-[11px]"><Btn w="w-[92px]">More...</Btn></div>
              </div>
            </div>
          </div>
        </div>
      </div>

      {/* edit menu */}
      <div className="absolute left-[40px] top-[30px] w-[206px] border border-[#6e6e6e] bg-[#2d2d2d] z-20 text-[15px]">
        <MenuRow t="Undo" k="Ctrl+Z" ic="undo" />
        <MenuRow t="Redo" ic="redo" dis />
        <MDiv />
        <MenuRow t="Move" k="F4" ic="move" />
        <MenuRow t="Copy" k="Esc" ic="copy" />
        <MenuRow t="Paste" dis />
        <MenuRow t="Mirror" k="e" ic="mirrorM" />
        <MenuRow t="Spin" k="c" />
        <MenuRow t="Change" k="F12" hi />
        <MenuRow t="Delete" k="Del" ic="trash" />
        <MDiv />
        <MenuRow t="Z-Copy" k="v" />
        <MenuRow t="Split Plane" sub />
        <MDiv />
        <MenuRow t="Vertex" ic="vertexM" />
        <MenuRow t="Delete Vertex" />
        <MenuRow t="Text" ic="textM" />
        <MDiv />
        <MenuRow t="Groups" />
        <MenuRow t="Properties" k="F3" />
        <MenuRow t="IPC2581 Specs" />
        <MenuRow t="Net Properties..." />
      </div>

      {/* annotation arrows */}
      <svg viewBox="0 0 3835 1590" className="absolute inset-0 w-[3835px] h-[1590px] pointer-events-none z-30">
        <path d="M237 188L288 198L283 210L442 340L437 344L267 230L257 235z" fill="#f84848" stroke="#f84848" strokeWidth="1" strokeLinejoin="round" />
        <path d="M2978 612L2983 618L3406 276L3415 283L3437 237L3433 233L3386 245L3392 258z" fill="#f84848" stroke="#f84848" strokeWidth="2" strokeLinejoin="round" />
        <path d="M3197 1367L3203 1373L3456 1227L3460 1243L3466 1243L3492 1202L3488 1199L3440 1207L3448 1216z" fill="#f84848" stroke="#f84848" strokeWidth="2" strokeLinejoin="round" />
      </svg>
    </div>
  );
}
